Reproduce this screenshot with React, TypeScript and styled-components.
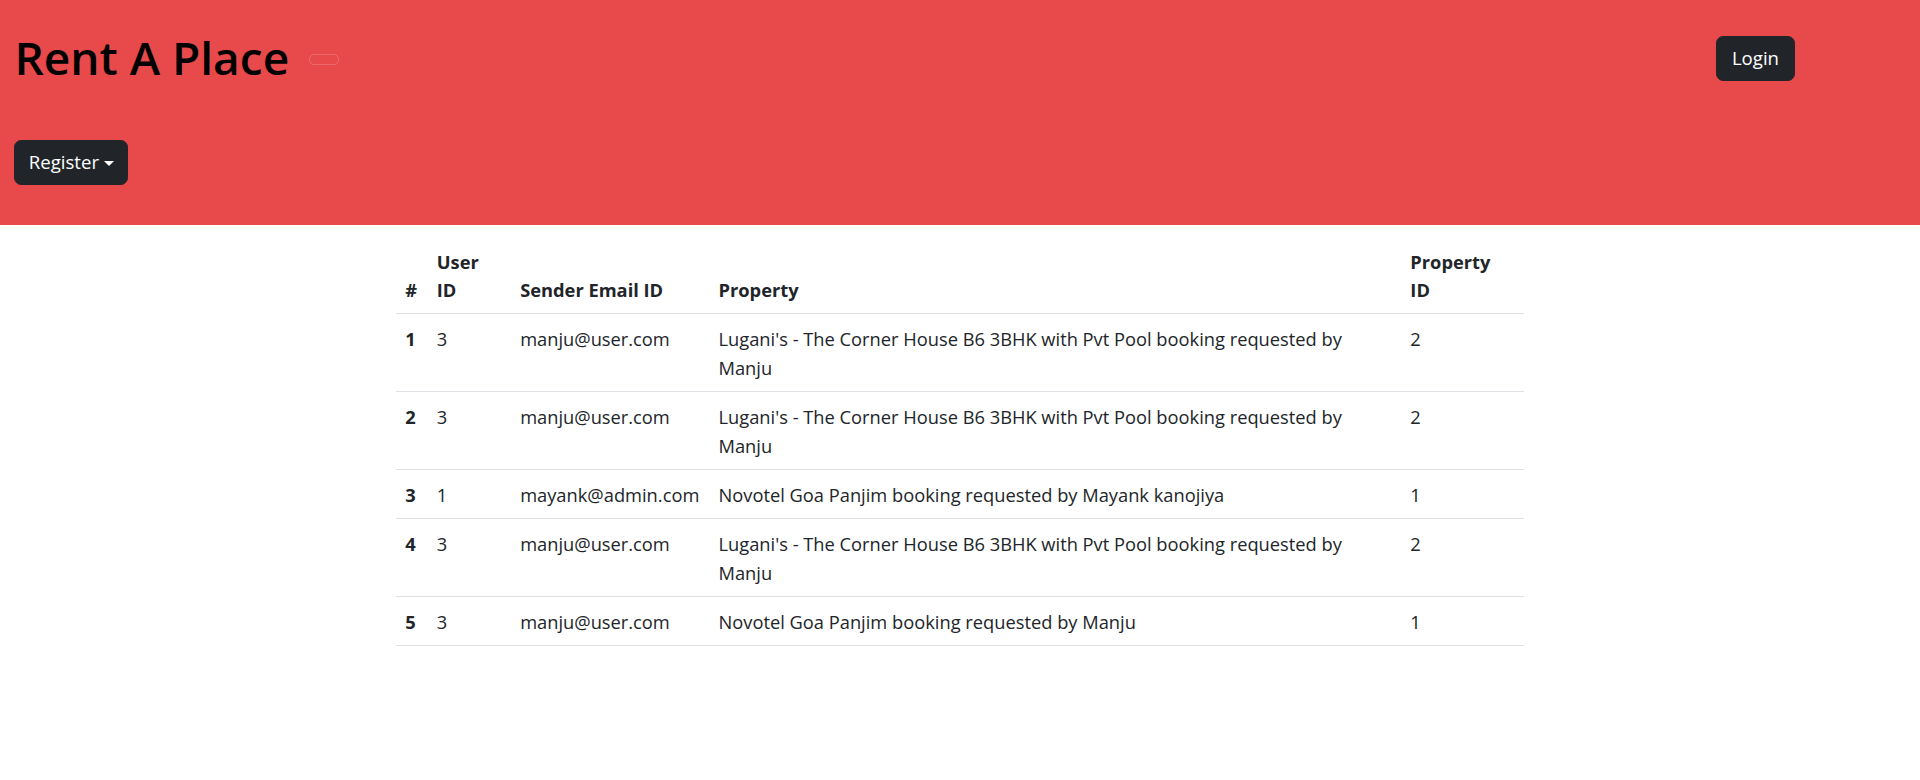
import React from "react";
import styled, { createGlobalStyle } from "styled-components";

const GlobalStyle = createGlobalStyle`
  html, body {
    margin: 0;
    padding: 0;
    background: #ffffff;
  }
  body {
    font-family: "Open Sans", "Noto Sans", sans-serif;
    color: #212529;
  }
`;

const Header = styled.header`
  background: #e8494b;
  height: 225px;
  box-sizing: border-box;
  padding: 30px 0 0 14.4px;
  display: flex;
  flex-direction: column;
  align-items: flex-start;
`;

const TopRow = styled.div`
  display: flex;
  align-items: center;
  align-self: stretch;
  height: 57.6px;
`;

const Title = styled.h1`
  margin: -2px 0 0;
  font-size: 46px;
  font-weight: 600;
  line-height: 57.6px;
  color: #000000;
`;

const Toggler = styled.button`
  width: 30px;
  height: 11px;
  margin-left: 20px;
  margin-top: 1px;
  padding: 0;
  border: 1px solid rgba(255, 255, 255, 0.18);
  border-radius: 5px;
  background: transparent;
`;

const DarkButton = styled.button`
  display: inline-flex;
  align-items: center;
  font-family: inherit;
  font-size: 18.6px;
  line-height: 28.8px;
  padding: 7.2px 14.4px;
  border: 1.2px solid #212529;
  border-radius: 7.2px;
  background: #212529;
  color: #ffffff;
  cursor: pointer;
`;

const LoginButton = styled(DarkButton)`
  margin-left: auto;
  margin-right: 125px;
  padding: 7.2px 15px;
`;

const RegisterButton = styled(DarkButton)`
  margin-top: 52px;
  padding: 7.2px 13.4px;
  &::after {
    content: "";
    display: inline-block;
    margin-left: 5px;
    margin-top: 2px;
    border-top: 5.76px solid #ffffff;
    border-left: 5.76px solid transparent;
    border-right: 5.76px solid transparent;
  }
`;

const Table = styled.table`
  width: 1128.5px;
  margin: 11.5px auto 0;
  border-collapse: collapse;
  table-layout: fixed;
  font-size: 18.3px;
  line-height: 28.8px;
  color: #212529;
`;

const Th = styled.th`
  text-align: left;
  vertical-align: bottom;
  font-weight: 700;
  padding: 11.1px 9.6px 8.1px;
  border-bottom: 1px solid #dee2e6;
`;

const Td = styled.td<{ $strong?: boolean }>`
  vertical-align: top;
  padding: 11.1px 9.6px 8.1px;
  border-bottom: 1px solid #dee2e6;
  font-weight: ${(p) => (p.$strong ? 700 : 400)};
`;

type Row = {
  id: number;
  userId: number;
  email: string;
  property: string;
  propertyId: number;
};

const rows: Row[] = [
  {
    id: 1,
    userId: 3,
    email: "manju@user.com",
    property:
      "Lugani's - The Corner House B6 3BHK with Pvt Pool booking requested by Manju",
    propertyId: 2,
  },
  {
    id: 2,
    userId: 3,
    email: "manju@user.com",
    property:
      "Lugani's - The Corner House B6 3BHK with Pvt Pool booking requested by Manju",
    propertyId: 2,
  },
  {
    id: 3,
    userId: 1,
    email: "mayank@admin.com",
    property: "Novotel Goa Panjim booking requested by Mayank kanojiya",
    propertyId: 1,
  },
  {
    id: 4,
    userId: 3,
    email: "manju@user.com",
    property:
      "Lugani's - The Corner House B6 3BHK with Pvt Pool booking requested by Manju",
    propertyId: 2,
  },
  {
    id: 5,
    userId: 3,
    email: "manju@user.com",
    property: "Novotel Goa Panjim booking requested by Manju",
    propertyId: 1,
  },
];

const colWidths = [31.4, 83.4, 198.4, 691.8, 123.5];

export default function App() {
  return (
    <>
      <GlobalStyle />
      <Header>
        <TopRow>
          <Title>Rent A Place</Title>
          <Toggler aria-label="Toggle navigation" />
          <LoginButton>Login</LoginButton>
        </TopRow>
        <RegisterButton>Register</RegisterButton>
      </Header>
      <Table>
        <colgroup>
          {colWidths.map((w, i) => (
            <col key={i} style={{ width: `${w}px` }} />
          ))}
        </colgroup>
        <thead>
          <tr>
            <Th>#</Th>
            <Th>User ID</Th>
            <Th>Sender Email ID</Th>
            <Th>Property</Th>
            <Th>Property ID</Th>
          </tr>
        </thead>
        <tbody>
          {rows.map((r) => (
            <tr key={r.id}>
              <Td $strong>{r.id}</Td>
              <Td>{r.userId}</Td>
              <Td>{r.email}</Td>
              <Td>{r.property}</Td>
              <Td>{r.propertyId}</Td>
            </tr>
          ))}
        </tbody>
      </Table>
    </>
  );
}
